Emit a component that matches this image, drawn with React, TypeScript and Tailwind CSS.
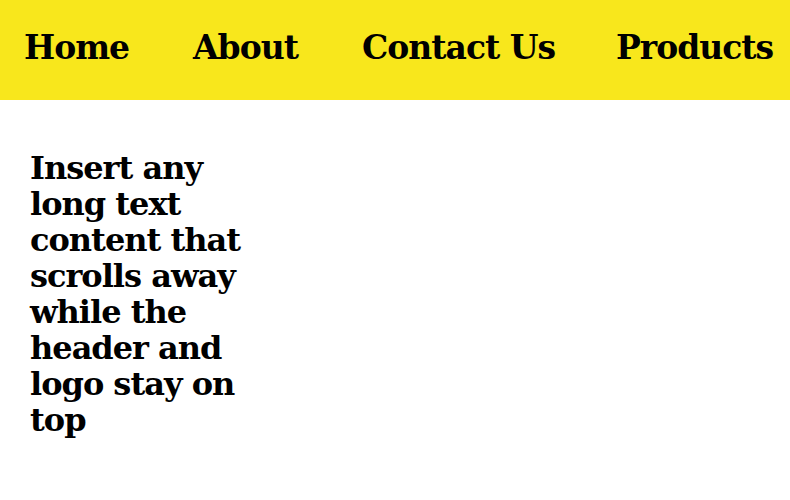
import React from "react";

const links = [
  { label: "Home", w: "w-[169px]" },
  { label: "About", w: "w-[169px]" },
  { label: "Contact Us", w: "w-[254px]" },
  { label: "Products", w: "w-auto" },
];

const App = () => {
  return (
    <div className="min-h-[500px] bg-white text-black font-['DejaVu_Serif',serif] font-bold">
      <header className="h-[100px] bg-[#f8e71c] flex items-center pl-[24px] pb-[6px] overflow-hidden">
        {links.map((l) => (
          <a
            key={l.label}
            href="#"
            className={`${l.w} shrink-0 whitespace-nowrap text-[33px] leading-none tracking-[-1px]`}
          >
            {l.label}
          </a>
        ))}
      </header>
      <main className="px-[30px] pt-[50px]">
        <p className="w-[224px] text-[32px] leading-[36px] tracking-[-1px]">
          Insert any long text content that scrolls away while the header and
          logo stay on top
        </p>
      </main>
    </div>
  );
};

export default App;
